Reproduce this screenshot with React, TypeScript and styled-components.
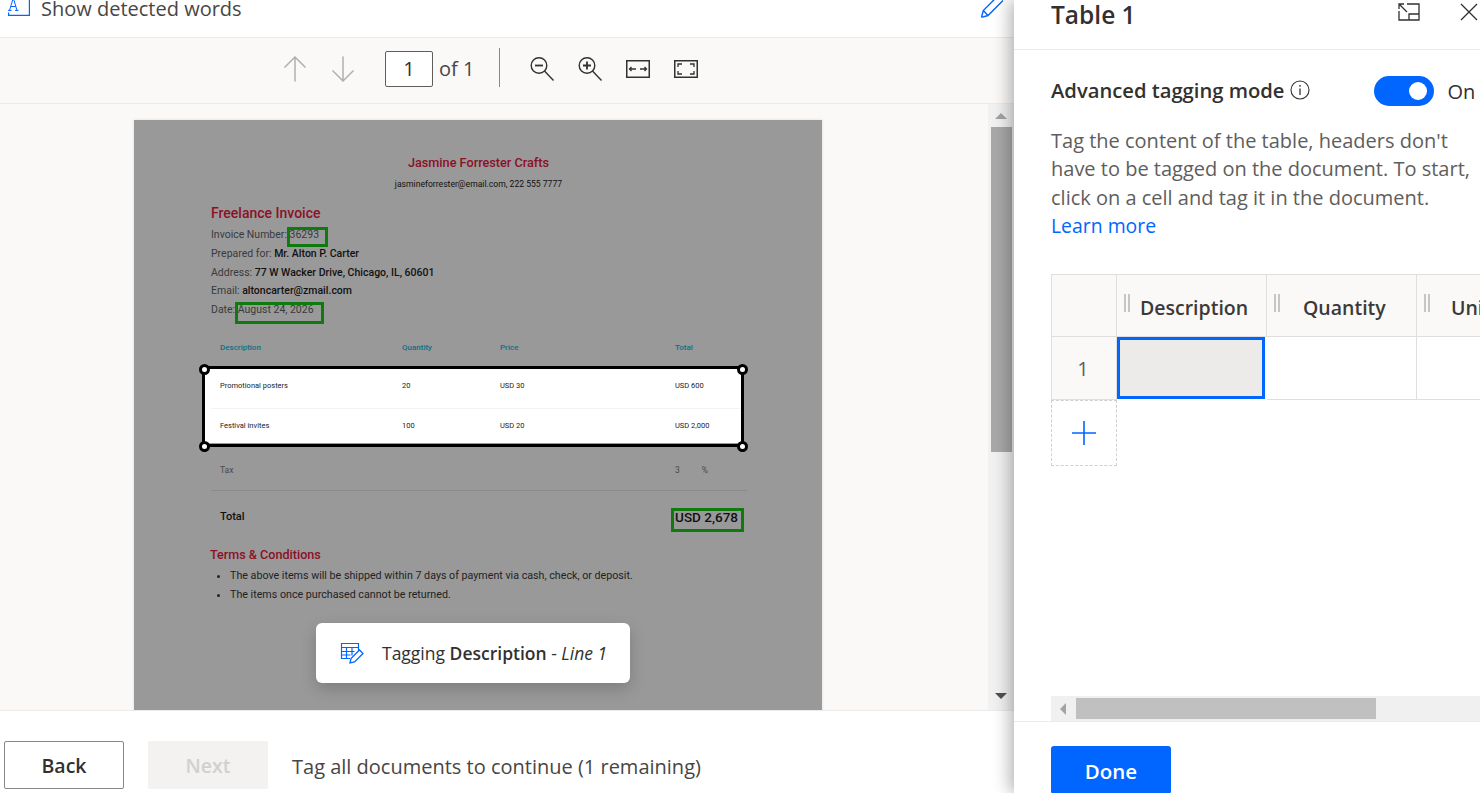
import React from "react";
import styled, { createGlobalStyle } from "styled-components";

const UI = `"Open Sans", "Noto Sans", "Liberation Sans", sans-serif`;
const DOC = `Roboto, "Liberation Sans", sans-serif`;

const Global = createGlobalStyle`
  html, body { margin: 0; padding: 0; height: 100%; overflow: hidden; background: #fff; }
  * { box-sizing: border-box; }
  #root { height: 100%; }
`;

const Shell = styled.div`
  display: flex; width: 1480px; height: 793px; overflow: hidden;
  font-family: ${UI}; color: #323130;
`;
const LeftPane = styled.main`
  width: 1014px; flex: none; display: flex; flex-direction: column; background: #fff;
`;
const TopBar = styled.div`
  height: 38px; flex: none; display: flex; align-items: flex-start; justify-content: space-between;
  padding: 0 9px 0 8px; border-bottom: 1px solid #edebe9; overflow: hidden;
`;
const TopLeft = styled.div`display: flex; align-items: flex-start; gap: 11px;`;
const TopLabel = styled.span`font-size: 20px; line-height: 18px; color: #484644;`;
const Toolbar = styled.div`
  height: 66px; flex: none; display: flex; align-items: center; background: #faf9f8;
  padding: 0 0 4px 271px; border-bottom: 1px solid #edebe9;
`;
const IconSlot = styled.span<{ $w?: number }>`
  width: ${(p) => p.$w ?? 48}px; height: 32px; display: flex; align-items: center; justify-content: center; flex: none;
`;
const PageInput = styled.div`
  width: 48px; height: 36px; margin-left: 18px; border: 1px solid #605e5c; border-radius: 2px; background: #fff;
  display: flex; align-items: center; justify-content: center; font-size: 20px; color: #323130;
`;
const OfLabel = styled.span`font-size: 20px; margin-left: 6px; width: 60px; color: #484644;`;
const ToolDivider = styled.span`width: 1px; height: 39px; background: #8a8886; margin: 0 18px 3px 0;`;
const Viewer = styled.div`
  position: relative; flex: 1; min-height: 0; background: #faf9f8; overflow: hidden;
  display: flex; padding: 16px 0 0 134px;
`;
const Page = styled.article`
  position: relative; width: 688px; height: 800px; flex: none; background: #999999;
  font-family: ${DOC}; padding: 36px 76px 0 77px; color: #111; box-shadow: 0 0 3px rgba(0,0,0,.12);
`;
const DocTitle = styled.h1`
  margin: 0; font: 500 12.7px/14px ${DOC}; color: #8c1026; text-align: center;
`;
const DocContact = styled.p`
  margin: 7px 0 0; font: 400 8.6px/14px ${DOC}; color: #111; text-align: center;
`;
const InvoiceHeading = styled.h2`
  margin: 13px 0 0; font: 500 14px/18px ${DOC}; color: #8c1026;
`;
const MetaList = styled.div`display: flex; flex-direction: column; margin-top: 4px;`;
const MetaRow = styled.div`font: 400 10.5px/18.75px ${DOC}; color: #3a3a3a; b { font-weight: 500; color: #111; }`;
const LineGrid = styled.div<{ $h: number; $tone: string; $size?: number; $weight?: number }>`
  display: grid; grid-template-columns: 182px 98px 175px 1fr; align-items: center;
  height: ${(p) => p.$h}px; padding-left: 9px; color: ${(p) => p.$tone};
  font: ${(p) => p.$weight ?? 400} ${(p) => p.$size ?? 7.5}px/10px ${DOC};
`;
const TableHead = styled(LineGrid)`margin-top: 18px; margin-right: -1px;`;
const RowsBand = styled.div`
  background: #fff; margin: 10px 0 0 -7px; width: 540px; padding-left: 7px;
`;
const RowLine = styled(LineGrid)`
  padding-bottom: 3px;
  & + & { border-top: 1px solid #f3f3f3; padding: 1px 0 0 9px; }
`;
const TaxRow = styled(LineGrid)`border-bottom: 1px solid #8a8a8a; margin-right: -1px; padding-top: 7px;`;
const TaxValue = styled.span`display: flex; gap: 22px;`;
const TotalRow = styled.div`
  display: flex; justify-content: space-between; align-items: center; height: 52px; padding: 1px 8px 0 9px;
`;
const TotalLabel = styled.span`font: 500 11px/12px ${DOC}; color: #111;`;
const TotalValue = styled.span`font: 500 13.5px/14px ${DOC}; color: #111;`;
const TermsHeading = styled.h3`margin: 4px 0 0 -1px; font: 500 12.6px/16px ${DOC}; color: #8c1026;`;
const Terms = styled.ul`
  margin: 3px 0 0; padding: 0 0 0 19px; font: 400 10.7px/19px ${DOC}; color: #222;
`;
const TagBox = styled.span<{ $l: number; $t: number; $w: number; $h: number }>`
  position: absolute; left: ${(p) => p.$l}px; top: ${(p) => p.$t}px; width: ${(p) => p.$w}px; height: ${(p) => p.$h}px;
  border: 3px solid #0f7b0f;
`;
const Selection = styled.div`
  position: absolute; left: 68px; top: 246px; width: 542px; height: 81px; border: 3px solid #000;
`;
const Handle = styled.span<{ $x: "l" | "r"; $y: "t" | "b" }>`
  position: absolute; width: 11px; height: 11px; border-radius: 50%; background: #fff; border: 3px solid #000;
  ${(p) => (p.$x === "l" ? "left: -6px;" : "right: -7px;")}
  ${(p) => (p.$y === "t" ? "top: -5px;" : "bottom: -8px;")}
`;
const Toast = styled.div`
  position: absolute; left: 316px; top: 519px; width: 314px; height: 60px; background: #fff; border-radius: 6px;
  display: flex; align-items: center; padding: 0 0 1px 24px; gap: 18px; font-size: 17.5px; color: #323130;
  box-shadow: 0 6px 16px rgba(0,0,0,.18);
  b { font-weight: 600; }
  i { font-style: italic; }
`;
const VScroll = styled.div`
  position: absolute; right: 0; top: 0; bottom: 0; width: 26px; background: #f1f1f1;
  display: flex; flex-direction: column; align-items: center;
`;
const VArrow = styled.span<{ $down?: boolean }>`
  position: absolute; ${(p) => (p.$down ? "bottom: 11px;" : "top: 9px;")} width: 0; height: 0;
  border-left: 6px solid transparent; border-right: 6px solid transparent;
  ${(p) => (p.$down ? "border-top: 6px solid #505050;" : "border-bottom: 6px solid #a3a3a3;")}
`;
const VThumb = styled.span`margin-top: 23px; width: 21px; height: 325px; background: #a8a8a8;`;
const Footer = styled.footer`
  height: 83px; flex: none; display: flex; align-items: flex-start; padding: 30px 0 0 4px; gap: 24px;
  border-top: 1px solid #edebe9; background: #fff;
`;
const FootButton = styled.button<{ $off?: boolean }>`
  width: 120px; height: 48px; border-radius: 2px; padding-top: 2px; font: 600 19.5px ${UI};
  background: ${(p) => (p.$off ? "#f3f2f1" : "#fff")};
  color: ${(p) => (p.$off ? "#d2d0ce" : "#323130")};
  border: ${(p) => (p.$off ? "none" : "1px solid #8a8886")};
`;
const FootNote = styled.span`font-size: 20px; line-height: 52px; color: #484644;`;
const RightPane = styled.aside`
  position: relative; width: 466px; flex: none; background: #fff; display: flex; flex-direction: column;
  box-shadow: -4px 0 16px rgba(0,0,0,.3);
`;
const PanelHead = styled.header`
  height: 50px; flex: none; display: flex; align-items: flex-start; padding-left: 37px; border-bottom: 1px solid #edebe9;
`;
const PanelTitle = styled.h2`margin: 0; flex: 1; font: 600 24.5px/30px ${UI}; color: #323130;`;
const HeadIcons = styled.div`display: flex; gap: 40px; padding: 3px 2px 0 0;`;
const PanelBody = styled.div`flex: 1; min-height: 0; padding: 26px 0 0 37px; display: flex; flex-direction: column; overflow: hidden;`;
const ModeRow = styled.div`display: flex; align-items: center; height: 30px;`;
const ModeLabel = styled.span`font: 600 20.2px/28px ${UI}; color: #323130; margin-bottom: 2px;`;
const InfoIcon = styled.span`margin-left: 6px; width: 20px; display: flex; margin-top: -3px;`;
const Switch = styled.span`
  margin-left: 64px; width: 60px; height: 30px; border-radius: 15px; background: #0066ff; display: flex; align-items: center;
  justify-content: flex-end; padding-right: 7px;
`;
const Knob = styled.span`width: 18px; height: 18px; border-radius: 50%; background: #fff;`;
const OnLabel = styled.span`margin-left: 13px; font-size: 20px; color: #323130;`;
const Help = styled.p`margin: 21px 0 0; width: 425px; font-size: 20px; line-height: 28.3px; color: #605e5c;`;
const HelpLink = styled.a`color: #0066ff; display: block; font-size: 19.4px;`;
const TableWrap = styled.div`margin-top: 34px; width: 429px; overflow: hidden; flex: none;`;
const TableGrid = styled.div`
  display: grid; grid-template-columns: 65px 150px 150px 150px; grid-template-rows: 62px 63px;
  width: 516px; border-left: 1px solid #e1dfdd; border-top: 1px solid #e1dfdd;
`;
const HeadCell = styled.div`
  background: #faf9f8; border-right: 1px solid #e1dfdd; border-bottom: 1px solid #e1dfdd;
  display: flex; align-items: center; padding-left: 7px; font: 600 19.5px ${UI}; color: #3b3a39; white-space: nowrap;
`;
const HeadText = styled.span<{ $gap: number }>`margin: 3px 0 0 ${(p) => p.$gap}px;`;
const Grip = styled.span`
  width: 6px; height: 18px; margin-bottom: 5px; border-left: 2px solid #c8c6c4; border-right: 2px solid #c8c6c4; flex: none;
`;
const RowNum = styled(HeadCell)`justify-content: center; padding: 0 2px 0 0; font-weight: 400; color: #605e5c; font-size: 20px;`;
const Cell = styled.div`border-right: 1px solid #e1dfdd; border-bottom: 1px solid #e1dfdd; background: #fff;`;
const ActiveCell = styled.div`
  margin: 0 1px 1px 0; border: 3px solid #0066ff; background: #edebe9; width: 148px;
`;
const AddRow = styled.div`
  width: 66px; height: 66px; border: 1px dashed #d2d0ce; display: flex; align-items: center; justify-content: center;
`;
const Spacer = styled.div`flex: 1;`;
const HScroll = styled.div`
  height: 25px; flex: none; background: #f0f0f0; display: flex; align-items: center; padding-left: 9px;
`;
const HArrow = styled.span`
  width: 0; height: 0; border-top: 6px solid transparent; border-bottom: 6px solid transparent; border-right: 6px solid #a3a3a3;
`;
const HThumb = styled.span`margin-left: 10px; width: 300px; height: 21px; background: #c0c0c0;`;
const PanelFoot = styled.div`
  height: 72px; flex: none; border-top: 1px solid #edebe9; padding: 24px 0 0 37px;
`;
const DoneButton = styled.button`
  width: 120px; height: 48px; padding-top: 2px; background: #0066ff; color: #fff; border: none; border-radius: 3px; font: 600 20.5px ${UI};
`;

const G = "#b3b0ad";
const ArrowUp = () => (
  <svg width="24" height="26" viewBox="0 0 24 26" fill="none" stroke={G} strokeWidth="1.5"><path d="M12 1V25.500M1.500 11.500L12 1l10.500 10.500" /></svg>
);
const ArrowDown = () => (
  <svg width="24" height="26" viewBox="0 0 24 26" fill="none" stroke={G} strokeWidth="1.5"><path d="M12 25V.5M1.500 14.500L12 25l10.500-10.500" /></svg>
);
const Zoom = ({ plus }: { plus?: boolean }) => (
  <svg width="24" height="24" viewBox="0 0 24 24" fill="none" stroke="#323130" strokeWidth="1.4">
    <circle cx="9" cy="8.500" r="7.800" />
    <path d="M14.500 14L23.500 23.500" />
    <path d={plus ? "M5 8.500h8M9 4.500v8" : "M5 8.500h8"} strokeWidth="1.8" />
  </svg>
);
const FitWidth = () => (
  <svg width="24" height="18" viewBox="0 0 24 18" fill="none" stroke="#323130">
    <rect x="0.75" y="0.75" width="22.5" height="16.5" strokeWidth="1.5" />
    <path d="M3.500 9H10M5.500 7L3.500 9l2 2M14 9h6.500M18.500 7l2 2-2 2" strokeWidth="1.3" />
  </svg>
);
const FitPage = () => (
  <svg width="24" height="18" viewBox="0 0 24 18" fill="none" stroke="#323130">
    <rect x="0.75" y="0.75" width="22.5" height="16.5" strokeWidth="1.5" />
    <path d="M4 7V4h4M16 4h4v3M4 11v3h4M20 11v3h-4" strokeWidth="1.3" />
  </svg>
);
const TextIcon = () => (
  <svg width="22" height="16" viewBox="0 0 22 16" fill="none" stroke="#0066ff" strokeWidth="1.2">
    <path d="M21.400 0v15.400H.6V12.500" />
    <path d="M0 10.400h3.500M7 10.400h3.500M1.500 10.400L5.300 -2M9 10.400L5.300 -2M2.800 6.500h5" strokeWidth="1" />
  </svg>
);
const Pencil = () => (
  <svg width="25" height="18" viewBox="0 0 25 18" fill="none" stroke="#0066ff" strokeWidth="1.4">
    <path d="M1.500 17.300L3.300 10.500L14.500 -.7M23 .5L8 15.500L1.500 17.300M3.300 10.500L8 15.500" />
  </svg>
);
const Expand = () => (
  <svg width="22" height="18" viewBox="0 0 22 18" fill="none" stroke="#323130" strokeWidth="1.3">
    <path d="M9 1h12v16H1V8" />
    <path d="M11 17v-6h10" />
    <path d="M1.500 1.500L9 9M1 6V1h5" />
  </svg>
);
const Close = () => (
  <svg width="18" height="18" viewBox="0 0 18 18" fill="none" stroke="#323130" strokeWidth="1.3"><path d="M1 1l16 16M17 1L1 17" /></svg>
);
const Info = () => (
  <svg width="20" height="20" viewBox="0 0 20 20" fill="none" stroke="#323130" strokeWidth="1.1">
    <circle cx="10" cy="10" r="9" />
    <path d="M10 8.500V15" strokeWidth="1.3" />
    <circle cx="10" cy="5.800" r=".9" fill="#323130" stroke="none" />
  </svg>
);
const Plus = () => (
  <svg width="26" height="26" viewBox="0 0 26 26" stroke="#0066ff" strokeWidth="1.6"><path d="M13 1v24M1 13h24" /></svg>
);
const TableEdit = () => (
  <svg width="24" height="22" viewBox="0 0 24 22" fill="none" stroke="#0066ff" strokeWidth="1.2">
    <path d="M10 16.500H1.500V1.500h17v7" />
    <path d="M1.500 5.500h17M1.500 9.500h13M1.500 13h9M6.500 5.500v11M12 5.500v8" />
    <path d="M10 21l1-4.500 8.500-8.500 3.500 3.500-8.500 8.500z" strokeWidth="1.3" />
  </svg>
);

export default function App() {
  return (
    <Shell>
      <Global />
      <LeftPane>
        <TopBar>
          <TopLeft>
            <TextIcon />
            <TopLabel>Show detected words</TopLabel>
          </TopLeft>
          <Pencil />
        </TopBar>
        <Toolbar>
          <IconSlot><ArrowUp /></IconSlot>
          <IconSlot><ArrowDown /></IconSlot>
          <PageInput>1</PageInput>
          <OfLabel>of 1</OfLabel>
          <ToolDivider />
          <IconSlot><Zoom /></IconSlot>
          <IconSlot><Zoom plus /></IconSlot>
          <IconSlot><FitWidth /></IconSlot>
          <IconSlot><FitPage /></IconSlot>
        </Toolbar>
        <Viewer>
          <Page>
            <DocTitle>Jasmine Forrester Crafts</DocTitle>
            <DocContact>jasmineforrester@email.com, 222 555 7777</DocContact>
            <InvoiceHeading>Freelance Invoice</InvoiceHeading>
            <MetaList>
              <MetaRow>Invoice Number: 36293</MetaRow>
              <MetaRow>Prepared for: <b>Mr. Alton P. Carter</b></MetaRow>
              <MetaRow>Address: <b>77 W Wacker Drive, Chicago, IL, 60601</b></MetaRow>
              <MetaRow>Email: <b>altoncarter@zmail.com</b></MetaRow>
              <MetaRow>Date: August 24, 2026</MetaRow>
            </MetaList>
            <TableHead $h={20} $tone="#0b7285" $weight={500} $size={8}>
              <span>Description</span><span>Quantity</span><span>Price</span><span>Total</span>
            </TableHead>
            <RowsBand>
              <RowLine $h={40} $tone="#222">
                <span>Promotional posters</span><span>20</span><span>USD 30</span><span>USD 600</span>
              </RowLine>
              <RowLine $h={35} $tone="#222">
                <span>Festival invites</span><span>100</span><span>USD 20</span><span>USD 2,000</span>
              </RowLine>
            </RowsBand>
            <TaxRow $h={48} $tone="#4a4a4a" $size={8.5}>
              <span>Tax</span><span /><span /><TaxValue><span>3</span><span>%</span></TaxValue>
            </TaxRow>
            <TotalRow>
              <TotalLabel>Total</TotalLabel>
              <TotalValue>USD 2,678</TotalValue>
            </TotalRow>
            <TermsHeading>Terms &amp; Conditions</TermsHeading>
            <Terms>
              <li>The above items will be shipped within 7 days of payment via cash, check, or deposit.</li>
              <li>The items once purchased cannot be returned.</li>
            </Terms>
            <TagBox $l={153} $t={107} $w={41} $h={20} />
            <TagBox $l={101} $t={182} $w={89} $h={22} />
            <TagBox $l={537} $t={388} $w={73} $h={24} />
            <Selection>
              <Handle $x="l" $y="t" /><Handle $x="r" $y="t" />
              <Handle $x="l" $y="b" /><Handle $x="r" $y="b" />
            </Selection>
          </Page>
          <VScroll>
            <VArrow />
            <VThumb />
            <VArrow $down />
          </VScroll>
          <Toast>
            <TableEdit />
            <span>Tagging <b>Description</b> - <i>Line 1</i></span>
          </Toast>
        </Viewer>
        <Footer>
          <FootButton>Back</FootButton>
          <FootButton $off>Next</FootButton>
          <FootNote>Tag all documents to continue (1 remaining)</FootNote>
        </Footer>
      </LeftPane>
      <RightPane>
        <PanelHead>
          <PanelTitle>Table 1</PanelTitle>
          <HeadIcons><Expand /><Close /></HeadIcons>
        </PanelHead>
        <PanelBody>
          <ModeRow>
            <ModeLabel>Advanced tagging mode</ModeLabel>
            <InfoIcon><Info /></InfoIcon>
            <Switch><Knob /></Switch>
            <OnLabel>On</OnLabel>
          </ModeRow>
          <Help>
            Tag the content of the table, headers don't have to be tagged on the document. To start, click on a cell and tag it in the document.
            <HelpLink>Learn more</HelpLink>
          </Help>
          <TableWrap>
            <TableGrid>
              <HeadCell />
              <HeadCell><Grip /><HeadText $gap={10}>Description</HeadText></HeadCell>
              <HeadCell><Grip /><HeadText $gap={23}>Quantity</HeadText></HeadCell>
              <HeadCell><Grip /><HeadText $gap={21}>Unit price</HeadText></HeadCell>
              <RowNum>1</RowNum>
              <ActiveCell />
              <Cell />
              <Cell />
            </TableGrid>
          </TableWrap>
          <AddRow><Plus /></AddRow>
          <Spacer />
          <HScroll><HArrow /><HThumb /></HScroll>
        </PanelBody>
        <PanelFoot><DoneButton>Done</DoneButton></PanelFoot>
      </RightPane>
    </Shell>
  );
}
